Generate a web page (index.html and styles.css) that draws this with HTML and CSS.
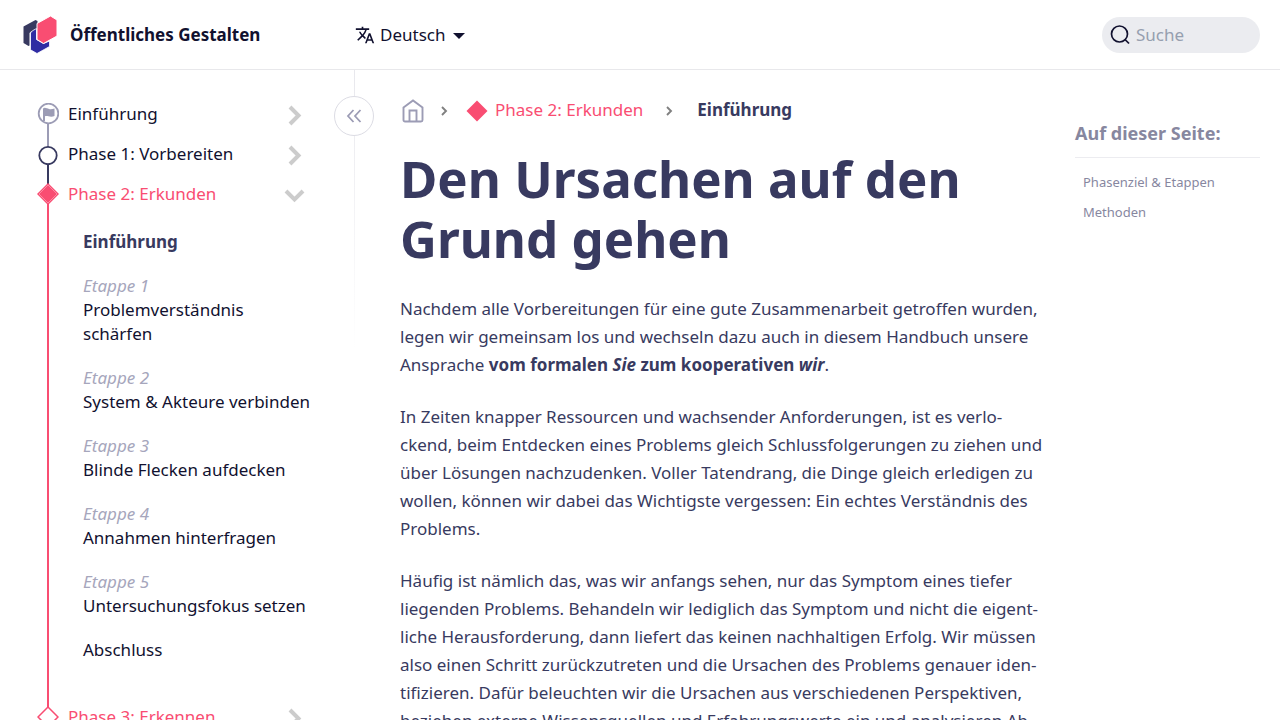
FILE: index.html
```html
<!DOCTYPE html>
<html lang="de">
<head>
<meta charset="utf-8">
<meta name="viewport" content="width=device-width, initial-scale=1">
<title>Den Ursachen auf den Grund gehen – Öffentliches Gestalten</title>
<link rel="stylesheet" href="styles.css">
</head>
<body>
<header class="topbar">
  <a class="brand" href="#">
    <svg class="logo" width="34" height="38" viewBox="0 0 34 38" aria-hidden="true">
      <path fill="#383a60" d="M.5 10.500 12.500 4 14.500 5V14L8 15.500 6.500 17V29.500L5.500 30 .5 27Z"/>
      <path fill="#2f2ca3" stroke="#fff" stroke-width=".8" d="M7.500 17Q8 15 13.500 12.500V23.500L20.500 27.500 26.500 25V30.500L14 37.500 7.500 33.800Z"/>
      <path fill="#f94d72" stroke="#fff" stroke-width="1" d="M27.500 0 34 4V20L20.500 27.500 14 23.500V7.500Z"/>
    </svg>
    <span>Öffentliches Gestalten</span>
  </a>
  <button class="language" type="button">
    <svg width="20" height="20" viewBox="0 0 24 24" fill="currentColor" aria-hidden="true"><path d="m12.870 15.070-2.540-2.510.03-.03A17.520 17.520 0 0 0 14.070 6H17V4h-7V2H8v2H1v2h11.170C11.500 7.920 10.440 9.750 9 11.350 8.070 10.320 7.300 9.190 6.690 8h-2c.73 1.630 1.730 3.170 2.980 4.560l-5.090 5.020L4 19l5-5 3.110 3.110zM18.500 10h-2L12 22h2l1.120-3h4.750L21 22h2zm-2.620 7 1.620-4.330L19.120 17z"/></svg>
    <span>Deutsch</span>
    <svg class="caret" width="12" height="6" viewBox="0 0 12 6" fill="currentColor" aria-hidden="true"><path d="M0 0h12L6 6z"/></svg>
  </button>
  <label class="search">
    <svg width="20" height="20" viewBox="0 0 20 20" fill="none" stroke="currentColor" stroke-width="1.700" aria-hidden="true"><circle cx="9.500" cy="9" r="8"/><path d="m15 14.500 4 4"/></svg>
    <input type="search" placeholder="Suche" aria-label="Suche">
  </label>
</header>
<div class="layout">
  <aside class="sidebar">
    <button class="collapse" type="button" aria-label="Seitenleiste einklappen">
      <svg width="16" height="14" viewBox="0 0 16 14" fill="none" stroke="currentColor" stroke-width="1.800" aria-hidden="true"><path d="M7.500 1 2 7l5.500 6M14.500 1 9 7l5.500 6"/></svg>
    </button>
    <nav aria-label="Kapitel">
      <ul class="phases">
        <li class="phase intro">
          <a class="phase-link" href="#">
            <svg class="marker" width="22" height="22" viewBox="0 0 22 22" aria-hidden="true"><circle cx="11.500" cy="10.500" r="9.800" fill="#fff" stroke="#9c9cb5" stroke-width="1.800"/><path fill="#9c9cb5" d="M6 5.500C8 4 10 5.500 12 6s3.500 0 5.500-.5V13c-2 .8-4 .8-6 .2-1.500-.4-2.500-.4-3.500 0V18H6z"/></svg>
            <span>Einführung</span>
            <svg class="chevron" width="14" height="20" viewBox="0 0 14 20" aria-hidden="true"><path d="m2 3 8.500 8.500L2 20"/></svg>
          </a>
        </li>
        <li class="phase prepare">
          <a class="phase-link" href="#">
            <svg class="marker" width="22" height="22" viewBox="0 0 22 22" aria-hidden="true"><circle cx="11" cy="12.500" r="8.700" fill="#fff" stroke="#383a60" stroke-width="1.800"/></svg>
            <span>Phase 1: Vorbereiten</span>
            <svg class="chevron" width="14" height="20" viewBox="0 0 14 20" aria-hidden="true"><path d="m2 3 8.500 8.500L2 20"/></svg>
          </a>
        </li>
        <li class="phase explore">
          <a class="phase-link" href="#">
            <svg class="marker" width="22" height="22" viewBox="0 0 22 22" aria-hidden="true"><path fill="#f94d72" d="m11 0 11 11-11 11L0 11z"/><path fill="none" stroke="#fff" stroke-opacity=".5" stroke-width=".7" d="m11 2 9 9-9 9-9-9z"/></svg>
            <span>Phase 2: Erkunden</span>
            <svg class="chevron" width="20" height="14" viewBox="0 0 20 14" aria-hidden="true"><path d="m1 4 8.500 8.500L18 4"/></svg>
          </a>
          <ul class="steps">
            <li><a class="current" href="#">Einführung</a></li>
            <li><a href="#"><em>Etappe 1</em>Problemverständnis schärfen</a></li>
            <li><a href="#"><em>Etappe 2</em>System &amp; Akteure verbinden</a></li>
            <li><a href="#"><em>Etappe 3</em>Blinde Flecken aufdecken</a></li>
            <li><a href="#"><em>Etappe 4</em>Annahmen hinterfragen</a></li>
            <li><a href="#"><em>Etappe 5</em>Untersuchungsfokus setzen</a></li>
            <li><a href="#">Abschluss</a></li>
          </ul>
        </li>
        <li class="phase recognise">
          <a class="phase-link" href="#">
            <svg class="marker" width="22" height="22" viewBox="0 0 22 22" aria-hidden="true"><path fill="#fff" stroke="#f94d72" stroke-width="1.500" d="m11 1 10 10-10 10L1 11z"/></svg>
            <span>Phase 3: Erkennen</span>
            <svg class="chevron" width="14" height="20" viewBox="0 0 14 20" aria-hidden="true"><path d="m2 3 8.500 8.500L2 20"/></svg>
          </a>
        </li>
      </ul>
    </nav>
  </aside>
  <main class="article">
    <nav class="breadcrumbs" aria-label="Brotkrumen">
      <a class="home" href="#" aria-label="Startseite"><svg width="22" height="24" viewBox="0 0 22 24" fill="none" stroke="currentColor" stroke-width="1.900" aria-hidden="true"><path d="M1.500 8.500 11 1.500l9.500 7V21a1.500 1.500 0 0 1-1.500 1.500H3A1.500 1.500 0 0 1 1.500 21z"/><path d="M7.500 22.500V11.500h7v11"/></svg></a>
      <svg width="8" height="10" viewBox="0 0 8 10" fill="none" stroke="#808080" stroke-width="1.900" aria-hidden="true"><path d="m2 1 4 4-4 4"/></svg>
      <a class="crumb" href="#"><svg width="22" height="22" viewBox="0 0 22 22" aria-hidden="true"><path fill="#f94d72" d="m11 .5 10.500 10.500L11 21.500.5 11z"/></svg><span>Phase 2: Erkunden</span></a>
      <svg width="8" height="10" viewBox="0 0 8 10" fill="none" stroke="#808080" stroke-width="1.900" aria-hidden="true"><path d="m2 1 4 4-4 4"/></svg>
      <strong>Einführung</strong>
    </nav>
    <h1>Den Ursachen auf den Grund gehen</h1>
    <p>Nachdem alle Vorbereitungen für eine gute Zusammenarbeit getroffen wurden,<br>legen wir gemeinsam los und wechseln dazu auch in diesem Handbuch unsere<br>Ansprache <strong>vom formalen <em>Sie</em> zum kooperativen <em>wir</em></strong>.</p>
    <p>In Zeiten knapper Ressourcen und wachsender Anforderungen, ist es verlo-<br>ckend, beim Entdecken eines Problems gleich Schlussfolgerungen zu ziehen und<br>über Lösungen nachzudenken. Voller Tatendrang, die Dinge gleich erledigen zu<br>wollen, können wir dabei das Wichtigste vergessen: Ein echtes Verständnis des<br>Problems.</p>
    <p>Häufig ist nämlich das, was wir anfangs sehen, nur das Symptom eines tiefer<br>liegenden Problems. Behandeln wir lediglich das Symptom und nicht die eigent-<br>liche Herausforderung, dann liefert das keinen nachhaltigen Erfolg. Wir müssen<br>also einen Schritt zurückzutreten und die Ursachen des Problems genauer iden-<br>tifizieren. Dafür beleuchten wir die Ursachen aus verschiedenen Perspektiven,<br>beziehen externe Wissensquellen und Erfahrungswerte ein und analysieren Ab-</p>
  </main>
  <aside class="contents">
    <h2>Auf dieser Seite:</h2>
    <nav aria-label="Auf dieser Seite">
      <a href="#">Phasenziel &amp; Etappen</a>
      <a href="#">Methoden</a>
    </nav>
  </aside>
</div>
</body>
</html>
```
FILE: styles.css
```css
* { box-sizing: border-box; }
body {
  margin: 0;
  height: 100vh;
  overflow: hidden;
  display: flex;
  flex-direction: column;
  background: #fff;
  color: #383a60;
  font: 17px/24px "Noto Sans", sans-serif;
}
a { color: inherit; text-decoration: none; }
ul { list-style: none; margin: 0; padding: 0; }
svg { flex: none; display: block; }
button { border: 0; padding: 0; background: none; font: inherit; color: inherit; cursor: pointer; }

.topbar {
  flex: none;
  display: grid;
  grid-template-columns: 355px 1fr 158px;
  align-items: center;
  height: 70px;
  padding-right: 20px;
  border-bottom: 1px solid #e8e8eb;
  color: #11112f;
}
.brand { display: flex; align-items: center; gap: 13px; padding-left: 23px; font-weight: 700; }
.language { display: flex; align-items: center; gap: 5px; justify-self: start; }
.caret { margin: 3px 0 0 3px; }
.search { display: flex; align-items: center; gap: 6px; height: 36px; padding: 0 8px; border-radius: 18px; background: #ebecf0; }
.search input { flex: 1; min-width: 0; border: 0; padding: 0; outline: 0; background: none; font: inherit; color: inherit; }
.search input::placeholder { color: #969faf; opacity: 1; }

.layout { flex: 1; min-height: 0; display: grid; grid-template-columns: 355px minmax(0, 1fr) 205px; }

.sidebar { position: relative; padding: 24px 50px 0 37px; }
.sidebar::after {
  content: "";
  position: absolute;
  top: 0;
  right: 0;
  width: 1px;
  height: 280px;
  background: linear-gradient(#e8e8ed, #fff);
}
.collapse {
  position: absolute;
  z-index: 1;
  top: 26px;
  right: -19px;
  width: 40px;
  height: 40px;
  display: grid;
  place-items: center;
  border: 1px solid #dcdce4;
  border-radius: 50%;
  background: #fff;
  color: #9c9cb5;
}
.phase { position: relative; color: #11112f; }
.phase::before { content: ""; position: absolute; left: 10px; top: 20px; bottom: -20px; width: 2px; background: #9c9cb5; }
.prepare::before { background: #383a60; }
.explore::before, .recognise::before { background: #f94d72; }
.phase-link { position: relative; display: flex; align-items: center; gap: 9px; height: 40px; }
.explore > .phase-link, .recognise > .phase-link { color: #f94d72; }
.phase-link span { flex: 1; }
.chevron { width: 20px; overflow: visible; fill: none; stroke: #ccc; stroke-width: 4; }
.steps { margin-right: -8px; padding: 16px 0 15px 46px; }
.steps li { margin-bottom: 20px; }
.steps a, .steps em { display: block; }
.steps em { color: #a6a6bc; }
.steps .current { color: #383a60; font-weight: 700; }

.article { padding: 26px 20px 0 45px; }
.breadcrumbs { display: flex; align-items: center; gap: 24px; height: 30px; }
.breadcrumbs strong, .crumb span { padding-bottom: 3px; }
.home { margin: 0 -8px 0 2px; color: #9c9cb5; }
.crumb { display: flex; align-items: center; gap: 7px; color: #f94d72; margin-left: -6px; margin-right: -2px; }
h1 { margin: 22px 0 27px; font-size: 51px; line-height: 60px; font-weight: 700; }
.article p { margin: 0 0 24px; line-height: 28px; white-space: nowrap; }

.contents { padding: 49px 20px 0 0; color: #87879f; }
h2 { margin: 0 0 9px; padding-bottom: 10px; border-bottom: 1px solid #ececf0; font-size: 18px; line-height: 28px; }
.contents nav { padding-left: 8px; font-size: 13px; line-height: 30px; }
.contents a { display: block; }
```
